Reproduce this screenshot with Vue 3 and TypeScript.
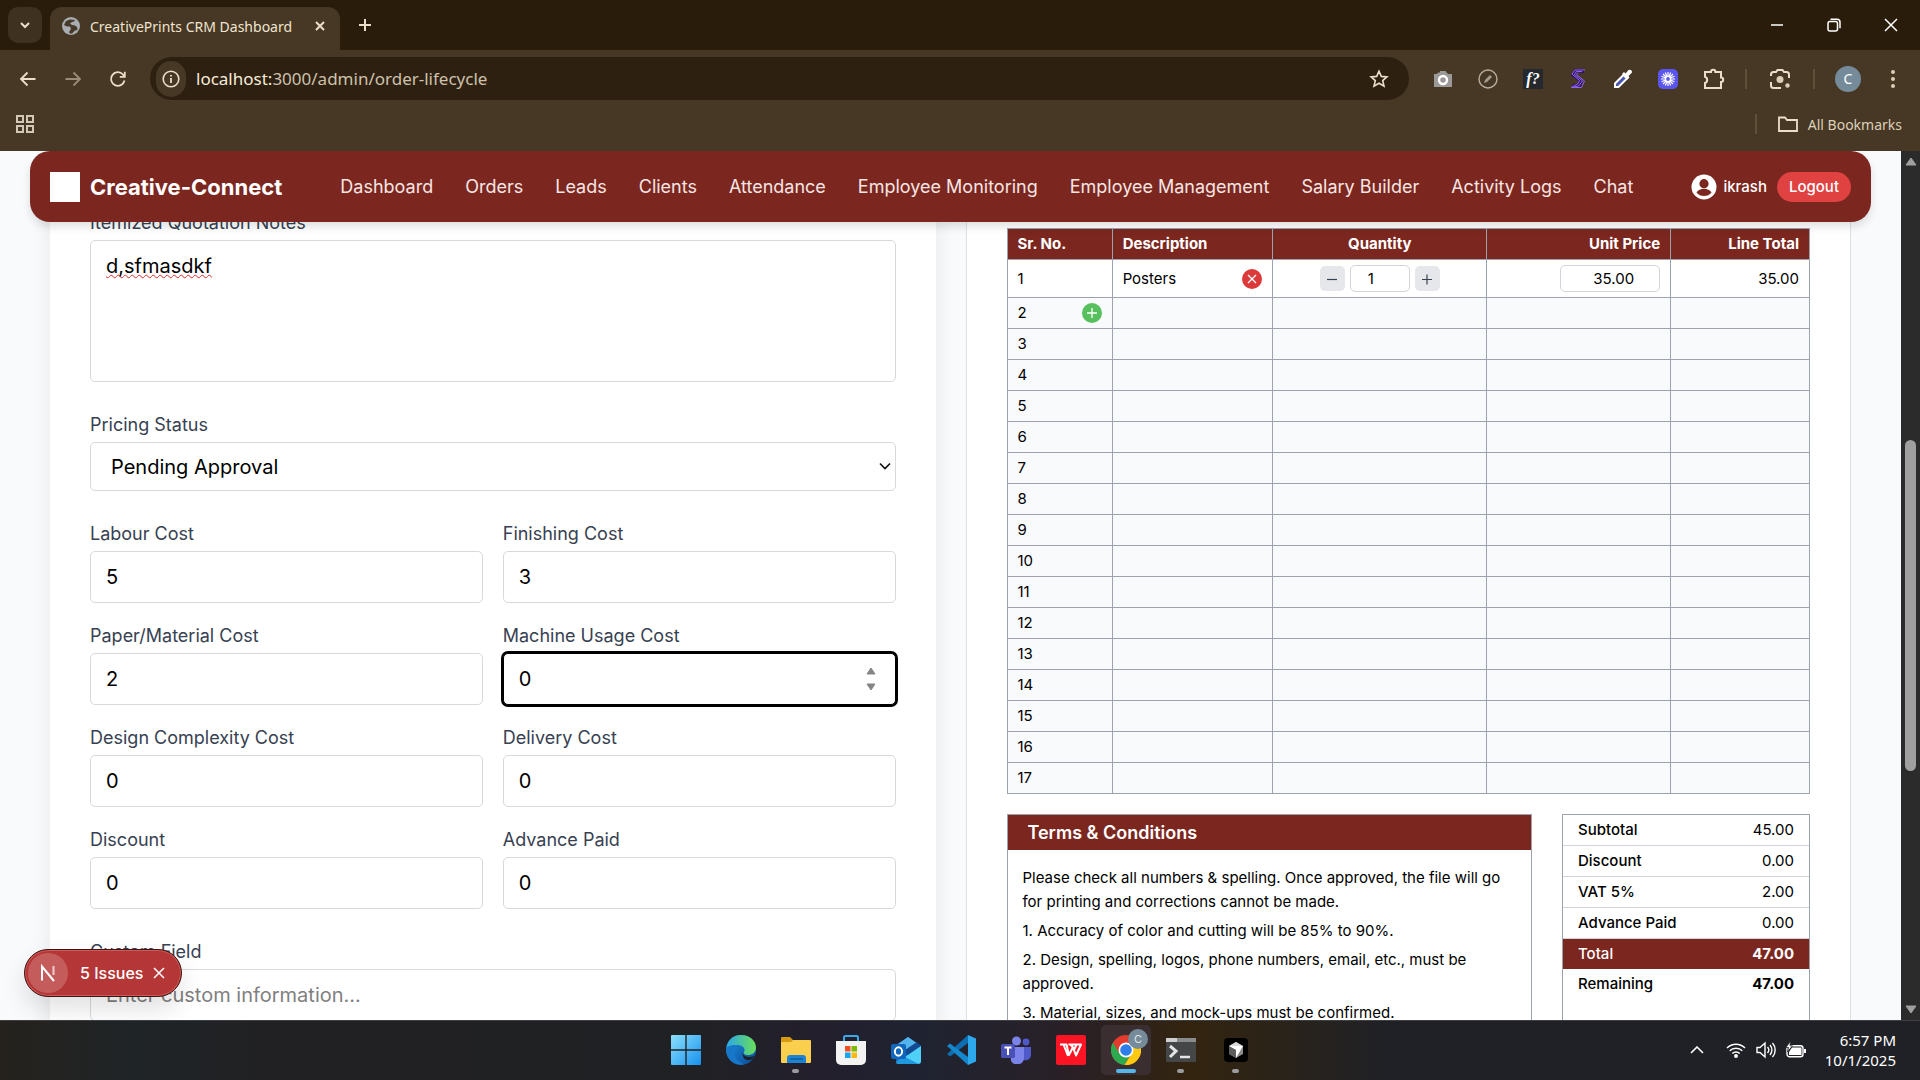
<script setup lang="ts">
import { ref, computed } from 'vue'

interface CostField {
  id: string
  label: string
  value: number
  active?: boolean
}

const navLinks: string[] = [
  'Dashboard', 'Orders', 'Leads', 'Clients', 'Attendance', 'Employee Monitoring',
  'Employee Management', 'Salary Builder', 'Activity Logs', 'Chat',
]

const notes = ref('d,sfmasdkf')
const pricingStatus = ref('Pending Approval')
const costs = ref<CostField[]>([
  { id: 'labour', label: 'Labour Cost', value: 5 },
  { id: 'finishing', label: 'Finishing Cost', value: 3 },
  { id: 'paper', label: 'Paper/Material Cost', value: 2 },
  { id: 'machine', label: 'Machine Usage Cost', value: 0, active: true },
  { id: 'design', label: 'Design Complexity Cost', value: 0 },
  { id: 'delivery', label: 'Delivery Cost', value: 0 },
  { id: 'discount', label: 'Discount', value: 0 },
  { id: 'advance', label: 'Advance Paid', value: 0 },
])
const customField = ref('')

const quantity = ref(1)
const unitPrice = ref('35.00')
const lineTotal = computed(() => (quantity.value * Number(unitPrice.value)).toFixed(2))
const emptyRows: number[] = Array.from({ length: 16 }, (_, i) => i + 2)

const totals = [
  { label: 'Subtotal', value: '45.00' },
  { label: 'Discount', value: '0.00' },
  { label: 'VAT 5%', value: '2.00' },
  { label: 'Advance Paid', value: '0.00' },
  { label: 'Total', value: '47.00', kind: 'total' },
  { label: 'Remaining', value: '47.00', kind: 'remaining' },
]

const terms: string[] = [
  'Please check all numbers & spelling. Once approved, the file will go for printing and corrections cannot be made.',
  '1. Accuracy of color and cutting will be 85% to 90%.',
  '2. Design, spelling, logos, phone numbers, email, etc., must be approved.',
  '3. Material, sizes, and mock-ups must be confirmed.',
]
</script>

<template>
  <div class="desktop">
    <header class="chrome">
      <div class="tab-strip">
        <button class="tab-search" aria-label="Search tabs">
          <svg width="12" height="12" viewBox="0 0 12 12"><path d="M2 4l4 4 4-4" class="ln" stroke-width="2" /></svg>
        </button>
        <div class="tab">
          <svg width="18" height="18" viewBox="0 0 18 18">
            <circle cx="9" cy="9" r="9" fill="#a9adb1" />
            <path d="M8 2.500L4 4 2 8l3 1.500h3l1 2.500-2 3 1 1.500h2l3-3 2.500-.5L15 10l-2-1.500-3-.5-2-1.500 2-1.500 2-.5 1-1.500z" fill="#46392a" />
          </svg>
          <span class="tab-title">CreativePrints CRM Dashboard</span>
          <button class="bare" aria-label="Close tab">
            <svg width="12" height="12" viewBox="0 0 12 12"><path d="M2 2l8 8M10 2l-8 8" class="ln" stroke-width="2" /></svg>
          </button>
        </div>
        <button class="bare new-tab" aria-label="New tab">
          <svg width="14" height="14" viewBox="0 0 14 14"><path d="M7 1v12M1 7h12" class="ln" stroke-width="2" /></svg>
        </button>
        <div class="window-controls">
          <button class="bare" aria-label="Minimize">
            <svg width="14" height="14" viewBox="0 0 14 14"><path d="M1 7h12" stroke="#fff" stroke-width="1.500" /></svg>
          </button>
          <button class="bare" aria-label="Restore">
            <svg width="14" height="14" viewBox="0 0 14 14" fill="none" stroke="#fff" stroke-width="1.500"><rect x="1" y="3.500" width="9.500" height="9.500" rx="2" /><path d="M3.500 1.200H10a3 3 0 0 1 3 3v6" /></svg>
          </button>
          <button class="bare" aria-label="Close window">
            <svg width="14" height="14" viewBox="0 0 14 14"><path d="M1 1l12 12M13 1L1 13" stroke="#fff" stroke-width="1.500" /></svg>
          </button>
        </div>
      </div>

      <div class="toolbar">
        <div class="nav-buttons">
          <button class="bare" aria-label="Back">
            <svg width="18" height="18" viewBox="0 0 18 18"><path d="M16.500 9H2M8.500 2.500L2 9l6.500 6.500" class="ln" stroke-width="1.800" /></svg>
          </button>
          <button class="bare dim" aria-label="Forward">
            <svg width="18" height="18" viewBox="0 0 18 18"><path d="M1.500 9H16M9.500 2.500L16 9l-6.500 6.500" class="ln" stroke-width="1.800" /></svg>
          </button>
          <button class="bare" aria-label="Reload">
            <svg width="18" height="18" viewBox="0 0 18 18"><path d="M15.500 10.500A6.800 6.800 0 1 1 14 4.500l1.500 2M15.800 1.800v5h-5" class="ln" stroke-width="1.800" /></svg>
          </button>
        </div>
        <div class="address">
          <span class="site-info">
            <svg width="18" height="18" viewBox="0 0 18 18"><circle cx="9" cy="9" r="7.800" class="ln" stroke-width="1.600" /><path d="M9 8v5M9 5v1.600" class="ln" stroke-width="1.800" /></svg>
          </span>
          <span class="url"><b>localhost:</b>3000/admin/order-lifecycle</span>
          <button class="bare" aria-label="Bookmark this tab">
            <svg width="20" height="20" viewBox="0 0 20 20"><path d="M10 2.200l2.300 5.200 5.600.5-4.200 3.700 1.300 5.500-5-2.900-5 2.900 1.300-5.500L2.100 7.900l5.600-.5z" class="ln" stroke-width="1.600" /></svg>
          </button>
        </div>
        <div class="extensions">
          <svg width="20" height="20" viewBox="0 0 20 20"><path d="M1 5h3l1-1.500h2V2h6v1.500h1L15 5h4v13H1z" fill="#9b9a98" /><circle cx="10" cy="11" r="4" fill="none" stroke="#fff" stroke-width="2.400" /></svg>
          <svg width="20" height="20" viewBox="0 0 20 20"><circle cx="10" cy="10" r="9" fill="none" stroke="#b7ad9f" stroke-width="1.400" /><path d="M6 14l1-3 5-5 2 2-5 5z" fill="#a59c90" /></svg>
          <span class="fn-ext">f?</span>
          <svg width="20" height="20" viewBox="0 0 20 20" fill="none"><path d="M16 2H7.500L5.500 6l7.500 6-2 5H4" stroke="#32166b" stroke-width="4" /><path d="M17 1H7L4 5l7.500 6.500L9.500 15 3 18.500M14 2.500H8.500L6.500 5.500l8 6.500-4 5L4 18.500h9.500l3-6.500-8-6.500 1.500-2" stroke="#9165ee" stroke-width="1" /></svg>
          <svg width="20" height="20" viewBox="0 0 20 20"><path d="M12.500 4.500l3-3.500q3.500-1 3.500 2.500l-3.500 3.500 1 1.500-2 2L9 5l2-2z" fill="#fff" /><path d="M10.500 6L2 14.500V18h3.500L14 9.500z" fill="#4a57b0" stroke="#fff" stroke-width="2" /></svg>
          <svg width="20" height="20" viewBox="0 0 20 20"><rect width="20" height="20" rx="5" fill="#5b55ef" /><path d="M10 3v14M3 10h14M5 5l10 10M15 5L5 15M7.300 3.500l5.400 13M12.700 3.500l-5.400 13M3.500 7.300l13 5.400M16.500 7.300l-13 5.400" stroke="#fff" stroke-width="1.200" /><circle cx="10" cy="10" r="3" fill="#fff" /><circle cx="10" cy="10" r="1.900" fill="#5b55ef" /></svg>
          <svg width="22" height="22" viewBox="0 0 22 22"><path d="M2 4h6a2.200 2.200 0 0 1 4.400 0H18v5.500a2.200 2.200 0 0 1 0 4.400V20H2v-5a3.300 3.300 0 0 0 0-6.200z" class="ln" stroke-width="2" /></svg>
        </div>
        <span class="sep"></span>
        <svg width="22" height="22" viewBox="0 0 22 22"><path d="M2 8V6.500A2.500 2.500 0 0 1 4.500 4H7l1.500-2h5L15 4h2.500A2.500 2.500 0 0 1 20 6.500V10M2 14v3.500A2.500 2.500 0 0 0 4.500 20H12" class="ln" stroke-width="2" /><circle cx="11" cy="11.500" r="3.500" fill="#dccfb8" /><circle cx="18.500" cy="17.500" r="2.200" fill="#dccfb8" /></svg>
        <span class="sep"></span>
        <button class="bare avatar" aria-label="Profile">C</button>
        <button class="bare" aria-label="Browser menu">
          <svg width="6" height="20" viewBox="0 0 6 20" fill="#dccfb8"><circle cx="3" cy="3" r="2" /><circle cx="3" cy="10" r="2" /><circle cx="3" cy="17" r="2" /></svg>
        </button>
      </div>

      <div class="bookmarks">
        <svg width="18" height="18" viewBox="0 0 18 18" fill="none" stroke="#d3c8b6" stroke-width="2"><path d="M1 1h6v6H1zM11 1h6v6h-6zM1 11h6v6H1zM11 11h6v6h-6z" /></svg>
        <div class="all-bookmarks">
          <span class="sep"></span>
          <svg width="22" height="18" viewBox="0 0 22 18"><path d="M2 2.500h6l2 2.500h10v11H2z" class="ln" stroke-width="1.800" /></svg>
          <span>All Bookmarks</span>
        </div>
      </div>
    </header>

    <div class="viewport">
      <div class="page">
        <nav class="site-nav">
          <div class="brand"><span class="brand-mark"></span>Creative-Connect</div>
          <div class="links">
            <a v-for="link in navLinks" :key="link" href="#">{{ link }}</a>
          </div>
          <div class="account">
            <svg width="26" height="26" viewBox="0 0 26 26"><circle cx="13" cy="13" r="12.500" fill="#fff" /><circle cx="13" cy="9.700" r="4.600" fill="#7b2720" /><path d="M5.500 18.500c3-5 12-5 15 0-3.500 4.700-11.500 4.700-15 0z" fill="#7b2720" /></svg>
            <span>ikrash</span>
            <button class="logout">Logout</button>
          </div>
        </nav>

        <main class="columns">
          <form class="card form-card" @submit.prevent>
            <div class="field">
              <label for="notes">Itemized Quotation Notes</label>
              <textarea id="notes" v-model="notes" class="control notes" spellcheck="false"></textarea>
            </div>
            <div class="field">
              <label for="status">Pricing Status</label>
              <div class="select-wrap">
                <select id="status" v-model="pricingStatus" class="control">
                  <option>Pending Approval</option>
                  <option>Approved</option>
                </select>
                <svg width="12" height="8" viewBox="0 0 12 8"><path d="M1 1.500l5 5 5-5" fill="none" stroke="#111" stroke-width="1.600" /></svg>
              </div>
            </div>
            <div class="cost-grid">
              <div v-for="cost in costs" :key="cost.id" class="field">
                <label :for="cost.id">{{ cost.label }}</label>
                <div class="number-wrap">
                  <input :id="cost.id" v-model="cost.value" type="number" class="control" :class="{ active: cost.active }">
                  <div v-if="cost.active" class="stepper">
                    <button type="button" aria-label="Increase" @click="cost.value++">
                      <svg width="10" height="8" viewBox="0 0 10 8"><path d="M5 1l4 6H1z" fill="#858585" stroke="#858585" stroke-linejoin="round" /></svg>
                    </button>
                    <button type="button" aria-label="Decrease" @click="cost.value--">
                      <svg width="10" height="8" viewBox="0 0 10 8"><path d="M5 7l4-6H1z" fill="#858585" stroke="#858585" stroke-linejoin="round" /></svg>
                    </button>
                  </div>
                </div>
              </div>
            </div>
            <div class="field">
              <label for="custom">Custom Field</label>
              <input id="custom" v-model="customField" type="text" class="control" placeholder="Enter custom information...">
            </div>
          </form>

          <section class="card quote-card">
            <table class="items">
              <colgroup><col class="c-no"><col class="c-desc"><col class="c-qty"><col class="c-price"><col></colgroup>
              <thead>
                <tr><th>Sr. No.</th><th>Description</th><th class="mid">Quantity</th><th class="end">Unit Price</th><th class="end">Line Total</th></tr>
              </thead>
              <tbody>
                <tr class="filled">
                  <td>1</td>
                  <td>
                    <div class="cell-row">
                      <span>Posters</span>
                      <button class="round remove" aria-label="Remove item">
                        <svg width="10" height="10" viewBox="0 0 10 10"><path d="M1 1l8 8M9 1L1 9" stroke="#fff" stroke-width="1.300" /></svg>
                      </button>
                    </div>
                  </td>
                  <td>
                    <div class="qty">
                      <button aria-label="Decrease quantity" @click="quantity--">
                        <svg width="12" height="12" viewBox="0 0 12 12"><path d="M1 6.500h10" stroke="#374151" stroke-width="1.200" /></svg>
                      </button>
                      <input v-model="quantity" type="text" aria-label="Quantity">
                      <button aria-label="Increase quantity" @click="quantity++">
                        <svg width="12" height="12" viewBox="0 0 12 12"><path d="M1 6.500h10M6 1.500v10" stroke="#374151" stroke-width="1.200" /></svg>
                      </button>
                    </div>
                  </td>
                  <td class="end"><input v-model="unitPrice" type="text" class="price" aria-label="Unit price"></td>
                  <td class="end">{{ lineTotal }}</td>
                </tr>
                <tr v-for="row in emptyRows" :key="row">
                  <td>
                    <div class="cell-row">
                      <span>{{ row }}</span>
                      <button v-if="row === 2" class="round add" aria-label="Add item">
                        <svg width="10" height="10" viewBox="0 0 10 10"><path d="M5 0v10M0 5h10" stroke="#fff" stroke-width="1.300" /></svg>
                      </button>
                    </div>
                  </td>
                  <td></td><td></td><td></td><td></td>
                </tr>
              </tbody>
            </table>

            <div class="summary">
              <section class="terms">
                <h2>Terms &amp; Conditions</h2>
                <div class="terms-body">
                  <p v-for="term in terms" :key="term">{{ term }}</p>
                </div>
              </section>
              <dl class="totals">
                <div v-for="line in totals" :key="line.label" :class="line.kind">
                  <dt>{{ line.label }}</dt><dd>{{ line.value }}</dd>
                </div>
              </dl>
            </div>
          </section>
        </main>

        <div class="issues">
          <span class="issues-logo">
            <svg width="18" height="18" viewBox="0 0 18 18" fill="none" stroke="#fff" stroke-width="2"><path d="M3 16.500V2.500L15 17" /><path d="M14.500 2v9" stroke-opacity=".7" /></svg>
          </span>
          <span>5 Issues</span>
          <button class="bare" aria-label="Dismiss issues">
            <svg width="12" height="12" viewBox="0 0 12 12"><path d="M1 1l10 10M11 1L1 11" stroke="#fff" stroke-width="1.500" /></svg>
          </button>
        </div>
      </div>

      <div class="scrollbar">
        <svg width="12" height="9" viewBox="0 0 12 9"><path d="M6 1l5 7H1z" fill="#9f9f9f" stroke="#9f9f9f" stroke-linejoin="round" /></svg>
        <div class="track"><span class="thumb"></span></div>
        <svg width="12" height="9" viewBox="0 0 12 9"><path d="M6 8l5-7H1z" fill="#9f9f9f" stroke="#9f9f9f" stroke-linejoin="round" /></svg>
      </div>
    </div>

    <footer class="taskbar">
      <div class="apps">
        <button class="app" aria-label="Start">
          <svg width="30" height="30" viewBox="0 0 30 30">
            <defs><linearGradient id="win" x2="1" y2="1"><stop stop-color="#8be0fb" /><stop offset="1" stop-color="#1791ef" /></linearGradient></defs>
            <path d="M1 0h13.300v14.300H0V1a1 1 0 0 1 1-1zM15.700 0H29a1 1 0 0 1 1 1v13.300H15.700zM0 15.700h14.300V30H1a1 1 0 0 1-1-1zM15.700 15.700H30V29a1 1 0 0 1-1 1H15.700z" fill="url(#win)" />
          </svg>
        </button>
        <button class="app" aria-label="Edge">
          <svg width="30" height="30" viewBox="0 0 30 30">
            <defs>
              <linearGradient id="ea" x2="1"><stop stop-color="#2aa6e8" /><stop offset="1" stop-color="#6adf58" /></linearGradient>
              <linearGradient id="eb" y2="1" x2="1"><stop stop-color="#1c93dc" /><stop offset="1" stop-color="#0c4a9a" /></linearGradient>
            </defs>
            <circle cx="15" cy="15" r="15" fill="url(#eb)" />
            <path d="M.5 12C2 4 8 0 15 0c9 0 15 6 15 12.500 0 5-4 7.500-8 7.500-3.500 0-5-1.500-4-3 2-3-1-7-6-7C7 10 2 11 .5 12z" fill="url(#ea)" />
            <path d="M29 20.500c-3 2.200-12 2.500-12.500-3.500-.5 7 5 10.500 10.500 6.500z" fill="#202126" />
            <path d="M10.500 13c-4 5-1 14 8 16.300C12 31 2 28 .3 16 1 11 8 9 13 10.500c-1 .5-2 1.500-2.500 2.500z" fill="#1877c8" />
          </svg>
        </button>
        <button class="app running" aria-label="File Explorer">
          <svg width="30" height="28" viewBox="0 0 30 28">
            <path d="M0 2a1 1 0 0 1 1-1h8l3 3h16v8H0z" fill="#d59b13" /><path d="M0 6h10l2-2h17a1 1 0 0 1 1 1v21a1 1 0 0 1-1 1H1a1 1 0 0 1-1-1z" fill="#fbcf4e" />
            <path d="M6 27v-5a3 3 0 0 1 3-3h13a3 3 0 0 1 3 3v5z" fill="#1c84d2" /><path d="M9 23h13" stroke="#0f5c9c" stroke-width="1.500" />
          </svg>
        </button>
        <button class="app" aria-label="Microsoft Store">
          <svg width="30" height="30" viewBox="0 0 30 30">
            <path d="M8 8V2.500A1.500 1.500 0 0 1 9.500 1h11A1.500 1.500 0 0 1 22 2.500V8" fill="none" stroke="#3aa9e8" stroke-width="2" />
            <path d="M0 6h30v19a5 5 0 0 1-5 5H5a5 5 0 0 1-5-5z" fill="#f3f3f3" />
            <path d="M9 11h5.500v5.500H9z" fill="#f04f23" /><path d="M15.500 11H21v5.500h-5.500z" fill="#7db902" /><path d="M9 17.500h5.500V23H9z" fill="#1ba4ee" /><path d="M15.500 17.500H21V23h-5.500z" fill="#fdb811" />
          </svg>
        </button>
        <button class="app" aria-label="Outlook">
          <svg width="30" height="28" viewBox="0 0 30 28">
            <path d="M5 9L17 1l13 9v15a3 3 0 0 1-3 3H8a3 3 0 0 1-3-3z" fill="#1a65b8" /><path d="M7 8l10-7 10 7-10 9z" fill="#54b4ec" /><path d="M14 14l12-8 4 4-14 10z" fill="#134b93" />
            <path d="M5 27l25-17v15a3 3 0 0 1-3 3H8z" fill="#4fd0f7" /><path d="M12 20l16 8H8a3 3 0 0 1-3-2z" fill="#1f98dd" />
            <rect y="8" width="15" height="15" rx="2" fill="#1067bd" /><ellipse cx="7.500" cy="15.500" rx="3.600" ry="4.200" fill="none" stroke="#fff" stroke-width="2" />
          </svg>
        </button>
        <button class="app" aria-label="Visual Studio Code">
          <svg width="30" height="30" viewBox="0 0 30 30">
            <path d="M22 0v8L4 21.500 1 19z" fill="#0c6db0" /><path d="M22 30v-8L4 8.500 1 11z" fill="#1487cf" /><path d="M22 0l8 3.500v23L22 30z" fill="#2ea8ec" />
          </svg>
        </button>
        <button class="app" aria-label="Teams">
          <svg width="30" height="28" viewBox="0 0 30 28">
            <circle cx="15.500" cy="5" r="4.500" fill="#7b83eb" /><circle cx="25" cy="6" r="3.400" fill="#5059c9" /><path d="M20 11h10v8a5.500 5.500 0 0 1-9 4z" fill="#5059c9" /><path d="M9 11h14v10a7 7 0 0 1-13 4z" fill="#7b83eb" />
            <rect y="8" width="14" height="14" rx="1.500" fill="#4950b8" /><path d="M3.500 11.500h7M7 11.500V19" stroke="#fff" stroke-width="2" />
          </svg>
        </button>
        <button class="app" aria-label="WPS Office">
          <svg width="30" height="30" viewBox="0 0 30 30"><rect width="30" height="30" rx="2" fill="#fb1524" /><path d="M4 9.500h6.500L13 20l3.500-7M7.500 9.500L12 21M12.500 9.500H25L20 20.500l-3-8-2.500-3M20.500 9.500L18 15" fill="none" stroke="#fff" stroke-width="2" stroke-linejoin="round" /></svg>
        </button>
        <button class="app current" aria-label="Google Chrome">
          <svg width="30" height="30" viewBox="0 0 30 30">
            <circle cx="15" cy="15" r="15" fill="#e33b2e" /><path d="M2 7.500A15 15 0 0 0 13.500 30L20 19l-5 3-7-4z" fill="#2da94f" /><path d="M28 7.500A15 15 0 0 1 13.500 30l7.500-12V7.500z" fill="#fdc911" />
            <circle cx="15" cy="15" r="7.500" fill="#fff" /><circle cx="15" cy="15" r="5.800" fill="#2f7de9" />
          </svg>
          <span class="badge">C</span>
        </button>
        <button class="app running" aria-label="Terminal">
          <svg width="30" height="24" viewBox="0 0 30 24"><rect width="30" height="24" rx="1" fill="#454648" /><path d="M0 0h30v4H0z" fill="#8a8b8c" /><path d="M0 0h11v4H0z" fill="#cfcfcf" /><path d="M4 8l6 5-6 6" fill="none" stroke="#e4e4e4" stroke-width="3" /><path d="M14 19h10" stroke="#e4e4e4" stroke-width="2.500" /></svg>
        </button>
        <button class="app running" aria-label="Cursor">
          <svg width="24" height="24" viewBox="0 0 24 24"><rect width="24" height="24" rx="4" fill="#000" /><path d="M12 4l7 4v8l-7 4-7-4V8z" fill="#8d8d8d" /><path d="M5 8l7-4 7 4-7 4z" fill="#dadada" /><path d="M5 8h14l-7 12v-8z" fill="#fff" /><path d="M5 8v8l7 4v-8z" fill="#5d5d5d" /></svg>
        </button>
      </div>
      <div class="tray">
        <svg class="up" width="14" height="8" viewBox="0 0 14 8"><path d="M1 7l6-6 6 6" fill="none" stroke="#fff" stroke-width="1.600" /></svg>
        <svg width="20" height="16" viewBox="0 0 20 16" fill="none" stroke="#fff" stroke-width="1.500"><path d="M1 6a12.500 12.500 0 0 1 18 0M3.700 8.800a9 9 0 0 1 12.600 0M6.300 11.500a5.300 5.300 0 0 1 7.400 0" /><circle cx="10" cy="14" r="1.200" fill="#fff" /></svg>
        <svg width="20" height="18" viewBox="0 0 20 18" fill="none" stroke="#fff" stroke-width="1.400"><path d="M1 6.500h3L9 2v14l-5-4.500H1zM11.500 6a4.500 4.500 0 0 1 0 6M14 4a7.500 7.500 0 0 1 0 10M16.500 2a10.500 10.500 0 0 1 0 14" /></svg>
        <svg width="20" height="18" viewBox="0 0 20 18"><rect x="1" y="4.700" width="16" height="11" rx="2.500" fill="none" stroke="#fff" stroke-width="1.400" /><path d="M6 6.500h9.500V14H3v-3zM18 8h2v4h-2z" fill="#fff" /><path d="M4.500 0L0 6.500h2.500L1.500 11 6.500 4.800H4z" fill="#fff" stroke="#202126" stroke-width=".8" /></svg>
        <div class="clock"><time>6:57 PM</time><time>10/1/2025</time></div>
      </div>
    </footer>
  </div>
</template>

<style>
body { margin: 0; overflow: hidden; }
</style>

<style scoped>
* { box-sizing: border-box; }
svg { display: block; flex: none; }
button, input, select, textarea { font: inherit; color: inherit; margin: 0; }
button { padding: 0; border: 0; cursor: pointer; }

.desktop { display: flex; flex-direction: column; height: 100vh; overflow: hidden; font-family: Inter, "Liberation Sans", sans-serif; }
.bare { display: flex; align-items: center; justify-content: center; background: none; }
.ln { fill: none; stroke: #ecdfc9; }

/* Browser frame */
.chrome { flex: none; background: #463824; color: #f0e4d0; font-family: "Noto Sans", sans-serif; }
.tab-strip { display: flex; height: 50px; background: #2a1c0b; padding-left: 8px; align-items: center; }
.tab-search { width: 34px; height: 36px; border-radius: 10px; background: #3f3120; display: flex; align-items: center; justify-content: center; }
.tab { align-self: flex-end; display: flex; align-items: center; width: 290px; height: 43px; margin-left: 8px; padding: 0 14px 5px 12px; border-radius: 12px 12px 0 0; background: #463824; }
.tab-title { flex: 1; margin-left: 10px; font-size: 14px; white-space: nowrap; }
.new-tab { margin-left: 18px; }
.window-controls { display: flex; margin-left: auto; gap: 43px; padding-right: 22px; }
.toolbar { display: flex; align-items: center; height: 57px; padding-right: 24px; }
.nav-buttons { display: flex; gap: 27px; margin-left: 19px; width: 131px; }
.dim { opacity: .5; }
.address { flex: 1; display: flex; align-items: center; height: 43px; padding: 0 20px 0 6px; border-radius: 22px; background: #2d2011; }
.site-info { display: flex; align-items: center; justify-content: center; width: 30px; height: 36px; border-radius: 16px; background: #463824; }
.url { flex: 1; margin-left: 10px; font-size: 17px; line-height: 22px; color: #cfc1ab; }
.url b { font-weight: 400; color: #f7ecd9; }
.extensions { display: flex; align-items: center; gap: 25px; margin: 0 20px 0 24px; }
.fn-ext { width: 20px; height: 20px; background: #25282d; color: #fff; font: italic 700 16px/20px "Liberation Serif", serif; text-align: center; }
.sep { width: 2px; height: 20px; background: #5f5039; }
.toolbar > .sep + svg { margin: 0 22px; }
.toolbar .avatar { width: 26px; height: 26px; margin: 0 29px 0 20px; border-radius: 50%; background: #768b99; color: #fff; font-size: 14px; }
.bookmarks { display: flex; align-items: center; justify-content: space-between; height: 44px; padding: 0 18px 10px 16px; }
.bookmarks, .all-bookmarks { color: #dccfb8; font-size: 14px; }
.all-bookmarks { display: flex; align-items: center; }
.all-bookmarks svg { margin: 0 9px 0 20px; }

/* Web page */
.viewport { flex: 1; min-height: 0; display: flex; }
.page { position: relative; flex: 1; min-width: 0; overflow: hidden; background: #f9fafc; color: #000; }
.site-nav { position: absolute; z-index: 2; top: 0; left: 30px; right: 30px; height: 71px; display: flex; align-items: center; justify-content: space-between; padding: 0 20px; border-radius: 20px; background: #7b2720; color: #fff; box-shadow: 0 5px 8px rgba(0, 0, 0, .12); }
.brand { display: flex; align-items: center; gap: 10px; font-size: 22px; font-weight: 700; }
.brand-mark { width: 30px; height: 30px; background: #fff; }
.links { display: flex; gap: 32px; font-size: 18px; white-space: nowrap; }
.links a { color: #f8e5e3; text-decoration: none; }
.account { display: flex; align-items: center; font-size: 15px; font-weight: 500; }
.account span { margin: 0 10px 0 6px; }
.logout { height: 30px; padding: 0 12px; border-radius: 15px; background: #e04141; }

.columns { display: grid; grid-template-columns: 1fr 1fr; gap: 30px; padding: 0 50px; }
.card { background: #fff; padding: 0 40px 40px; }
.form-card { display: flex; flex-direction: column; gap: 30px; padding-top: 59px; box-shadow: 0 5px 20px rgba(0, 0, 0, .08); }
.quote-card { border: 1px solid #dfe1e7; border-width: 0 1px; padding-top: 77px; }
.field label { display: block; margin-bottom: 5px; color: #374151; font-size: 18px; line-height: 25px; font-weight: 400; }
.control { display: block; width: 100%; height: 52px; padding: 0 15px; border: 1px solid #d8d9dc; border-radius: 5px; background: #fff; font-size: 20px; outline: 0; }
.control::placeholder { color: #808080; opacity: 1; }
.notes { height: 142px; padding: 10px 15px; line-height: 30px; resize: none; text-decoration: underline wavy #e02a2a 1px; text-underline-offset: 1px; text-decoration-skip-ink: none; }
.select-wrap, .number-wrap { position: relative; }
.select-wrap select { appearance: none; height: 49px; padding-left: 20px; }
.select-wrap svg { position: absolute; right: 5px; top: 20px; pointer-events: none; }
.cost-grid { display: grid; grid-template-columns: 1fr 1fr; gap: 20px; }
.number-wrap input { appearance: textfield; }
.number-wrap input::-webkit-inner-spin-button { appearance: none; margin: 0; }
.number-wrap .active { border-color: #000; box-shadow: 0 0 0 2px #000; }
.stepper { position: absolute; top: 14px; right: 20px; display: flex; flex-direction: column; gap: 8px; }
.stepper button { background: none; }

.items { width: 100%; border-collapse: collapse; table-layout: fixed; font-size: 15px; line-height: 20px; }
.c-no { width: 13.1%; }
.c-desc { width: 20%; }
.c-qty { width: 26.7%; }
.c-price { width: 22.9%; }
.items th, .items td { height: 31px; padding: 0 10px; border: 1px solid #9ca3af; text-align: left; }
.items th { background: #7b2720; color: #fff; font-weight: 700; }
.items td { background: #f9fafc; }
.items .filled td { height: 38px; background: #fff; }
.items .mid { text-align: center; }
.items .end { text-align: right; }
.cell-row { display: flex; align-items: center; justify-content: space-between; }
.round { display: flex; align-items: center; justify-content: center; width: 20px; height: 20px; border-radius: 50%; }
.remove { background: #dc3a3a; }
.add { background: #56c05c; }
.qty { display: flex; align-items: center; justify-content: center; gap: 5px; }
.qty button { display: flex; align-items: center; justify-content: center; width: 25px; height: 25px; border-radius: 5px; background: #e5e7eb; }
.qty input { width: 60px; height: 27px; padding: 0 17px; border: 1px solid #d1d5db; border-radius: 5px; background: #fff; }
.items .price { width: 100px; height: 27px; padding: 0 25px 0 5px; border: 1px solid #d1d5db; border-radius: 5px; background: #fff; text-align: right; }

.summary { display: grid; grid-template-columns: 1fr 248px; gap: 30px; margin-top: 20px; font-size: 15px; }
.terms { border: 1px solid #9ca3af; min-height: 300px; }
.terms h2 { margin: 0; padding: 0 20px; background: #7b2720; color: #fff; font-size: 18px; line-height: 35px; font-weight: 600; }
.terms-body { padding: 16px 15px; line-height: 24px; }
.terms-body p { margin: 0 0 5px; }
.totals { margin: 0; border: 1px solid #9ca3af; }
.totals div { display: flex; justify-content: space-between; height: 31px; padding: 0 15px; line-height: 30px; border-bottom: 1px solid #d1d5db; }
.totals dt { font-weight: 500; }
.totals dd { margin: 0; }
.totals .total { height: 30px; background: #7b2720; color: #fff; border: 0; }
.totals .total dd, .totals .remaining dd { font-weight: 700; }
.totals .remaining { border: 0; }

.issues { position: absolute; z-index: 3; left: 24px; bottom: 23px; display: flex; align-items: center; height: 48px; padding: 0 16px 0 3px; border: 1px solid #3a1512; border-radius: 24px; background: #b53636; color: #fff; font-size: 16px; font-weight: 500; box-shadow: inset 0 0 0 1px #d05a5a, 0 12px 24px rgba(0, 0, 0, .12); }
.issues-logo { display: flex; align-items: center; justify-content: center; width: 40px; height: 40px; margin-right: 12px; border-radius: 50%; background: #c45c5c; }
.issues .bare { margin-left: 10px; }

.scrollbar { display: flex; flex-direction: column; align-items: center; width: 19px; padding: 6px 0; background: #2b2b2b; }
.track { flex: 1; display: flex; flex-direction: column; align-items: center; width: 100%; }
.track::before { content: ""; flex: 274 0 0; }
.track::after { content: ""; flex: 234 0 0; }
.thumb { flex: 331 0 0; width: 11px; border-radius: 6px; background: #9f9f9f; }

/* Windows taskbar */
.taskbar { flex: none; position: relative; display: flex; align-items: center; justify-content: center; height: 60px; padding: 0 0 2px 2px; border-top: 1px solid #3f3f42; background: linear-gradient(90deg, #25221d 0%, #1f2427 7%, #212123 14%, #202124 36%, #231f2d 43%, #1f2331 48%, #2a2026 56%, #33240f 62%, #2b2318 66%, #202126 72%, #202126 100%); color: #fff; }
.apps { display: flex; gap: 5px; }
.app { position: relative; display: flex; align-items: center; justify-content: center; width: 50px; height: 50px; border-radius: 5px; background: none; }
.running::after, .current::after { content: ""; position: absolute; bottom: 2px; left: 50%; width: 7px; height: 4px; margin-left: -4px; border-radius: 2px; background: #9b9b9d; }
.current { background: #3b2e31; }
.current::after { width: 20px; margin-left: -10px; background: #54b6ea; }
.badge { position: absolute; top: 4px; right: 3px; width: 20px; height: 20px; border-radius: 50%; background: #768b99; color: #dfe5e9; font-size: 11px; line-height: 20px; }
.tray { position: absolute; right: 24px; top: 0; bottom: 2px; display: flex; align-items: center; gap: 10px; font-family: "Noto Sans", sans-serif; font-size: 15px; }
.tray .up { margin-right: 12px; }
.clock { display: flex; flex-direction: column; width: 80px; line-height: 20px; text-align: right; }
</style>
